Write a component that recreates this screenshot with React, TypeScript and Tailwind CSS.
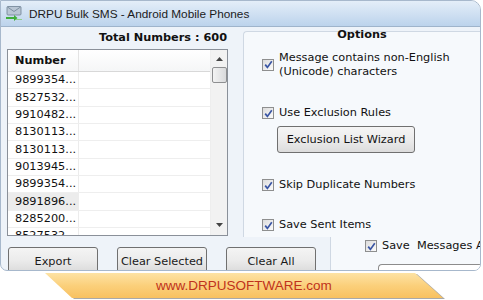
import type { ReactNode } from 'react'

const numbers = [
  '9899354...',
  '8527532...',
  '9910482...',
  '8130113...',
  '8130113...',
  '9013945...',
  '9899354...',
  '9891896...',
  '8285200...',
  '8527532...',
]

function Check() {
  return (
    <span className="flex h-[12px] w-[12px] shrink-0 items-center justify-center border border-[#8e8f8f] bg-gradient-to-br from-[#dcdcdc] to-[#fbfbfb]">
      <svg width="9" height="9" viewBox="0 0 9 9">
        <path d="M1.2 4.6 L3.4 7.4 L7.8 1.2" fill="none" stroke="#3a56a4" strokeWidth="1.7" />
      </svg>
    </span>
  )
}

function Option({ children, className = '' }: { children: ReactNode; className?: string }) {
  return (
    <div className={`flex items-center gap-[5px] pl-[18px] ${className}`}>
      <Check />
      <span>{children}</span>
    </div>
  )
}

function WinButton({ label }: { label: string }) {
  return (
    <div className="flex h-[27px] w-[90px] shrink-0 items-start justify-center rounded-t-[3px] border border-[#707070] bg-gradient-to-b from-[#f4f4f4] via-[#ebebeb] to-[#d9d9d9] pt-[7px] text-[#1a1a1a]">
      {label}
    </div>
  )
}

export default function App() {
  return (
    <div className="h-[300px] w-[483px] overflow-hidden bg-white font-['DejaVu_Sans',Verdana,sans-serif] text-[11.3px] leading-[14px] text-[#111]">
      {/* window */}
      <div className="flex h-[271px] w-[481px] flex-col overflow-hidden rounded-tr-[10px] rounded-b-[7px] border border-[#a7b8cc] bg-[#eef3f9]">
        {/* title bar */}
        <div className="flex h-[26px] shrink-0 items-center gap-[6px] border-b border-[#9fb4cb] bg-gradient-to-b from-[#e4eef8] to-[#bcd3ec] pl-[4px]">
          <svg width="18" height="18" viewBox="0 0 18 18">
            <rect x="2" y="1.5" width="14" height="8.5" rx="1" fill="#b9c6d4" stroke="#6f8193" strokeWidth="0.8" />
            <path d="M2.5 2 L9 6.5 L15.5 2" fill="none" stroke="#6f8193" strokeWidth="0.8" />
            <path d="M1 12 H9 V10 L12.5 13 L9 16 V14 H1 Z" fill="#3fae3a" />
            <path d="M17 14.5 H11" stroke="#8fd08a" strokeWidth="1.2" />
          </svg>
          <span className="font-['Liberation_Sans',Arial,sans-serif] text-[11.8px] text-[#1b1b1b]">
            DRPU Bulk SMS - Android Mobile Phones
          </span>
        </div>

        {/* main area */}
        <div className="flex h-[210px] shrink-0">
          {/* left: numbers */}
          <div className="flex w-[242px] shrink-0 flex-col">
            <div className="flex h-[22px] items-center justify-end pr-[16px] font-bold">Total Numbers : 600</div>
            <div className="ml-[6px] flex h-[187px] w-[221px] border border-[#8a9099] bg-white">
              <div className="flex w-[202px] flex-col overflow-hidden">
                <div className="flex h-[22px] shrink-0 border-b border-[#d8d8d8] bg-gradient-to-b from-white to-[#f5f6f7]">
                  <div className="flex w-[71px] items-center border-r border-[#e3e3e3] pl-[7px] font-bold">Number</div>
                  <div className="flex-1" />
                </div>
                {numbers.map((n, i) => (
                  <div key={i} className="flex h-[17.35px] shrink-0 border-b border-[#eeeeee]">
                    <div
                      className={`flex w-[71px] items-center border-r border-[#ececec] pl-[7px] ${
                        i === 7 ? 'bg-[#ececec]' : ''
                      }`}
                    >
                      {n}
                    </div>
                    <div className="flex-1" />
                  </div>
                ))}
              </div>
              {/* scrollbar */}
              <div className="flex w-[17px] flex-col items-center border-l border-[#eeeeee] bg-[#f2f2f2]">
                <svg className="mt-[7px]" width="7" height="4" viewBox="0 0 7 4">
                  <path d="M0 4 L3.5 0 L7 4 Z" fill="#444" />
                </svg>
                <div className="mt-[6px] h-[16px] w-[15px] rounded-[2px] border border-[#8e8f91] bg-gradient-to-r from-[#f3f3f3] to-[#d9dadc]" />
                <div className="flex-1" />
                <svg className="mb-[8px]" width="7" height="4" viewBox="0 0 7 4">
                  <path d="M0 0 L7 0 L3.5 4 Z" fill="#444" />
                </svg>
              </div>
            </div>
          </div>

          {/* right: options */}
          <div className="relative mt-[4px] flex-1 rounded-tl-[4px] border-l border-t border-[#cfd8e3] bg-[#f6f9fc]">
            <div className="absolute left-0 right-0 top-[-4px] text-center font-bold">Options</div>
            <div className="flex flex-col pt-[19px]">
              <div className="flex items-center gap-[5px] pl-[18px]">
                <Check />
                <span className="leading-[13.5px]">
                  Message contains non-English
                  <br />
                  (Unicode) characters
                </span>
              </div>
              <Option className="mt-[28px]">Use Exclusion Rules</Option>
              <div className="ml-[33px] mt-[6px] flex h-[27px] w-[138px] items-center justify-center rounded-[3px] border border-[#707070] bg-gradient-to-b from-[#f5f5f5] via-[#ececec] to-[#dcdcdc]">
                Exclusion List Wizard
              </div>
              <Option className="mt-[25px]">Skip Duplicate Numbers</Option>
              <Option className="mt-[26px]">Save Sent Items</Option>
            </div>
          </div>
        </div>

        {/* bottom row */}
        <div className="flex flex-1">
          <div className="flex w-[329px] shrink-0 gap-[19px] pl-[7px] pt-[10px]">
            <WinButton label="Export" />
            <WinButton label="Clear Selected" />
            <WinButton label="Clear All" />
          </div>
          <div className="flex flex-1 flex-col border-l border-[#cfd8e3] bg-[#f6f9fc]">
            <div className="flex items-center gap-[5px] whitespace-nowrap pl-[34px] pt-[2px]">
              <Check />
              <span className="whitespace-pre">Save  Messages As</span>
            </div>
            <div className="ml-[47px] mt-[11px] h-[10px] flex-1 rounded-tl-[4px] border-l border-t border-[#8c8c8c] bg-white" />
          </div>
        </div>
      </div>

      {/* banner */}
      <div className="relative ml-[45px] mt-[2px] h-[25px] w-[398px]">
        <div className="absolute left-[2px] top-[1px] h-[25px] w-[398px] bg-[#a9a9a9] [clip-path:polygon(0_0,370px_0,398px_100%,27px_100%)]" />
        <div className="absolute inset-0 bg-gradient-to-b from-[#fde3a4] via-[#fbd07b] to-[#f8c160] [clip-path:polygon(0_0,370px_0,398px_100%,27px_100%)]" />
        <div className="relative flex h-full items-center justify-center pt-[1px] font-['Liberation_Sans',Arial,sans-serif] text-[13.5px] text-[#c0321c]">
          www.DRPUSOFTWARE.com
        </div>
      </div>
    </div>
  )
}
